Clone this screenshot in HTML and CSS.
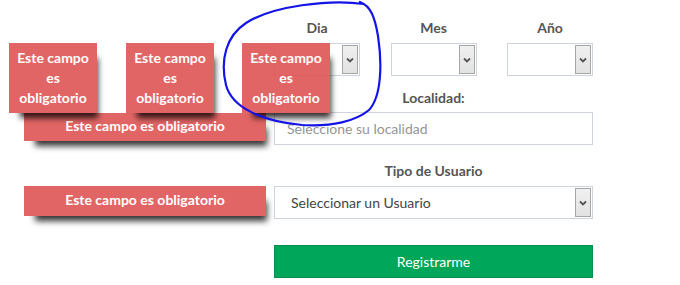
FILE: index.html
```html
<!DOCTYPE html>
<html lang="es">
<head>
  <meta charset="UTF-8">
  <title>Registro</title>
  <meta name="viewport" content="width=device-width, initial-scale=1.0">
  <link rel="stylesheet" href="styles.css">
</head>
<body>
  <form class="registro-form">
    <div class="fecha-row">
      <div class="campo">
        <label>Dia</label>
        <div class="select-box"><span class="valor"></span><span class="flecha"><svg width="8" height="6" viewBox="0 0 8 6"><path d="M1 1.5 L4 4.5 L7 1.5" fill="none" stroke="#555" stroke-width="1.8"/></svg></span></div>
      </div>
      <div class="campo">
        <label>Mes</label>
        <div class="select-box"><span class="valor"></span><span class="flecha"><svg width="8" height="6" viewBox="0 0 8 6"><path d="M1 1.5 L4 4.5 L7 1.5" fill="none" stroke="#555" stroke-width="1.8"/></svg></span></div>
      </div>
      <div class="campo">
        <label>Año</label>
        <div class="select-box"><span class="valor"></span><span class="flecha"><svg width="8" height="6" viewBox="0 0 8 6"><path d="M1 1.5 L4 4.5 L7 1.5" fill="none" stroke="#555" stroke-width="1.8"/></svg></span></div>
      </div>
    </div>

    <div class="campo campo-localidad">
      <label>Localidad:</label>
      <input type="text" placeholder="Seleccione su localidad">
    </div>

    <div class="campo campo-tipo">
      <label>Tipo de Usuario</label>
      <div class="select-box select-ancho"><span class="valor">Seleccionar un Usuario</span><span class="flecha"><svg width="8" height="6" viewBox="0 0 8 6"><path d="M1 1.5 L4 4.5 L7 1.5" fill="none" stroke="#555" stroke-width="1.8"/></svg></span></div>
    </div>

    <button type="submit">Registrarme</button>
  </form>

  <!-- mensajes de validacion -->
  <div class="error error-ancho error-localidad">Este campo es obligatorio</div>
  <div class="error error-ancho error-tipo">Este campo es obligatorio</div>
  <div class="error error-fecha error-1">Este campo es obligatorio</div>
  <div class="error error-fecha error-2">Este campo es obligatorio</div>
  <div class="error error-fecha error-3">Este campo es obligatorio</div>

  <svg class="marca" width="680" height="285" viewBox="0 0 680 285">
    <path d="M364 4 C 330 -1, 272 6, 246 23 C 226 36, 220 60, 226 85 C 232 108, 262 121, 302 125 C 332 127, 356 121, 369 110 C 382 96, 382 62, 378 36 C 375 18, 371 6, 360 2" fill="none" stroke="#1414e6" stroke-width="2.2" stroke-linecap="round"/>
  </svg>
</body>
</html>
```

FILE: styles.css
```css
    body {
      margin: 0;
      padding: 0;
      background: #fff;
      font-family: 'Lato', 'Liberation Sans', Arial, sans-serif;
      font-size: 14px;
      color: #444;
    }
    .registro-form {
      width: 319px;
      margin-left: 274px;
      padding-top: 18px;
      display: flex;
      flex-direction: column;
    }
    .fecha-row {
      display: flex;
      justify-content: space-between;
    }
    .fecha-row .campo {
      width: 86px;
    }
    .campo {
      display: flex;
      flex-direction: column;
    }
    .campo label {
      text-align: center;
      font-weight: 700;
      color: #555;
      line-height: 20px;
      margin-bottom: 5px;
    }
    .campo-localidad {
      margin-top: 12px;
    }
    .campo-localidad label {
      margin-bottom: 4px;
    }
    .campo-tipo {
      margin-top: 16px;
    }
    .select-box {
      height: 33px;
      box-sizing: border-box;
      border: 1px solid #cfd3db;
      background: #fff;
      display: flex;
      align-items: stretch;
    }
    .select-box .valor {
      flex: 1;
      line-height: 31px;
      padding-left: 16px;
      color: #444;
    }
    .select-box .flecha {
      width: 14px;
      margin: 1px;
      border: 1px solid #a6a6a6;
      background: linear-gradient(#f0f0f0, #e2e2e2);
      display: flex;
      align-items: center;
      justify-content: center;
    }
    .campo input {
      height: 33px;
      box-sizing: border-box;
      border: 1px solid #cfd3db;
      padding: 0 12px;
      font-family: inherit;
      font-size: 14px;
      outline: none;
    }
    .campo input::placeholder {
      color: #959595;
    }
    .registro-form button {
      margin-top: 26px;
      height: 33px;
      background: #00a65a;
      border: 1px solid #05904f;
      color: #fff;
      font-family: inherit;
      font-size: 14px;
      cursor: pointer;
    }

    .error {
      position: absolute;
      box-sizing: border-box;
      background: rgba(222, 84, 84, 0.9);
      color: #fff;
      font-weight: 700;
      text-align: center;
      box-shadow: 6px 10px 6px -5px rgba(0,0,0,0.8);
    }
    .error-ancho {
      left: 24px;
      width: 242px;
      line-height: 26px;
    }
    .error-localidad {
      top: 113px;
      height: 28px;
    }
    .error-tipo {
      top: 186px;
      height: 30px;
      line-height: 28px;
    }
    .error-fecha {
      top: 43px;
      width: 88px;
      height: 70px;
      padding: 5px 4px;
      line-height: 20px;
    }
    .error-1 { left: 9px; }
    .error-2 { left: 126px; }
    .error-3 { left: 242px; }

    .marca {
      position: absolute;
      left: 0;
      top: 0;
      pointer-events: none;
    }
```
